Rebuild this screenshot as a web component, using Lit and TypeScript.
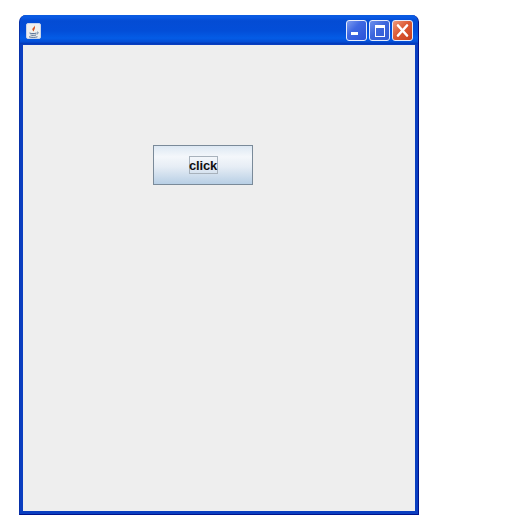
import { LitElement, html, css } from "lit";
import { customElement } from "lit/decorators.js";

@customElement("app-root")
export class AppRoot extends LitElement {
  static styles = css`
    :host {
      display: block;
      width: 512px;
      height: 527px;
      box-sizing: border-box;
      padding: 15px 0 0 19px;
      background: #fff;
      font-family: "Liberation Sans", Arial, sans-serif;
    }
    .window {
      width: 400px;
      height: 500px;
      box-sizing: border-box;
      display: flex;
      flex-direction: column;
      background: #0a3ec0;
      border-radius: 7px 7px 0 0;
      border: 1px solid #0831a8;
      border-top: 0;
      border-bottom-color: #00138c;
      border-right-color: #00138c;
      overflow: hidden;
    }
    .title {
      height: 29px;
      flex: none;
      box-sizing: border-box;
      display: flex;
      align-items: center;
      padding: 2px 5px 0 6px;
      background: linear-gradient(180deg, #0a5be0 0%, #0a5ae4 8%, #044cd4 20%, #034ed8 55%, #045ce6 80%, #044ed6 92%, #0236b4 100%);
    }
    .app-icon {
      width: 15px;
      height: 16px;
      display: block;
    }
    .spacer { flex: 1; }
    .controls { display: flex; gap: 2px; }
    .ctl {
      width: 21px;
      height: 21px;
      box-sizing: border-box;
      border: 1px solid #e6ecfb;
      border-radius: 3px;
      display: flex;
      align-items: center;
      justify-content: center;
    }
    .min { background: linear-gradient(135deg, #7e9df0 0%, #3f68e2 40%, #2a52d8 100%); }
    .max { background: linear-gradient(135deg, #6f90ec 0%, #3c66dc 45%, #2f5ad6 100%); }
    .close { background: linear-gradient(135deg, #ee9a7c 0%, #dc5a34 45%, #c83e1c 100%); }
    .ctl svg { display: block; }
    .body {
      flex: 1;
      margin: 1px 3px 3px 3px;
      background: #eeeeee;
      padding: 100px 0 0 130px;
    }
    button {
      width: 100px;
      height: 40px;
      margin: 0;
      padding: 10px 0 0;
      box-sizing: border-box;
      border: 1px solid #7a8a99;
      background: linear-gradient(180deg, #dde8f3 0%, #f4f7fb 28%, #e6edf5 55%, #b8cfe5 100%);
      display: flex;
      align-items: flex-start;
      justify-content: center;
      font: bold 12px "Liberation Sans", Arial, sans-serif;
      color: #111;
    }
    .label {
      width: 29px;
      height: 18px;
      box-sizing: border-box;
      border: 1px solid #a8b2bc;
      padding-top: 2px;
      display: flex;
      align-items: center;
      justify-content: center;
      font-size: 13px;
      line-height: 14px;
      letter-spacing: -0.2px;
    }
  `;

  render() {
    return html`
      <div class="window">
        <div class="title">
          <svg class="app-icon" viewBox="0 0 15 16">
            <rect x="0.5" y="0.5" width="14" height="15" rx="1.5" fill="#f0f0ee" stroke="#c9d4ea"/>
            <path d="M8.500 2c1 2-3 3-2 5 .4.900 1 1.200 1.400 1.700C7.500 7 10.100 5.500 8.500 2z" fill="#d9531e"/>
            <path d="M3.500 10c2 .8 5 .8 7 0M4.500 12c1.500.5 4 .5 5.500 0M3 13.800c2.500.8 6 .8 8.500 0" fill="none" stroke="#44628c" stroke-width="0.900"/>
            <path d="M11 9.200c1.500-.5 2 1.300-.4 2" fill="none" stroke="#44628c" stroke-width="0.800"/>
          </svg>
          <div class="spacer"></div>
          <div class="controls">
            <div class="ctl min">
              <svg width="19" height="19" viewBox="0 0 19 19"><rect x="4" y="11" width="7" height="3" fill="#fff"/></svg>
            </div>
            <div class="ctl max">
              <svg width="19" height="19" viewBox="0 0 19 19"><rect x="5.500" y="4.500" width="9" height="11" fill="none" stroke="#fff"/><rect x="5" y="4" width="10" height="3" fill="#fff"/></svg>
            </div>
            <div class="ctl close">
              <svg width="19" height="19" viewBox="0 0 19 19"><path d="M5 4.500l9 10M14 4.500l-9 10" stroke="#fff" stroke-width="2.600" stroke-linecap="round"/></svg>
            </div>
          </div>
        </div>
        <div class="body">
          <button><span class="label">click</span></button>
        </div>
      </div>
    `;
  }
}
